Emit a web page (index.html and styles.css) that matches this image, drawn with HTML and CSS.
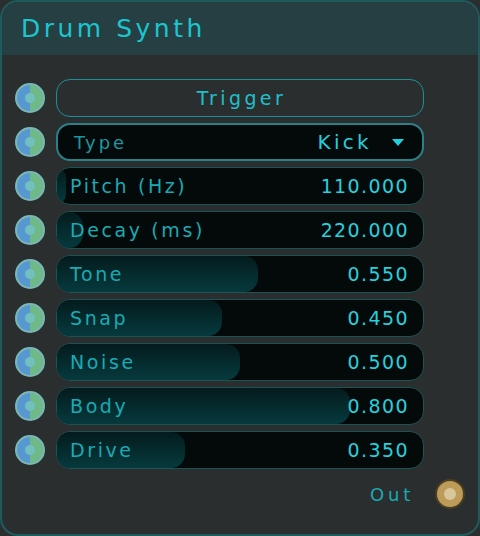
FILE: index.html
```html
<!DOCTYPE html>
<html>
<head>
<meta charset="utf-8">
<link rel="stylesheet" href="styles.css">
</head>
<body>
<div class="panel">
  <div class="header"><span class="title">Drum Synth</span></div>
  <div class="rows">
    <div class="row"><span class="port"></span><button class="trigger">Trigger</button></div>
    <div class="row"><span class="port"></span>
      <div class="select"><span class="sel-label">Type</span><span class="sel-value">Kick</span><span class="caret"></span></div>
    </div>
    <div class="row"><span class="port"></span>
      <div class="slider"><span class="fill" style="width:9px"></span><span class="s-label">Pitch (Hz)</span><span class="s-value">110.000</span></div>
    </div>
    <div class="row"><span class="port"></span>
      <div class="slider"><span class="fill" style="width:26px"></span><span class="s-label">Decay (ms)</span><span class="s-value">220.000</span></div>
    </div>
    <div class="row"><span class="port"></span>
      <div class="slider"><span class="fill" style="width:55%"></span><span class="s-label">Tone</span><span class="s-value">0.550</span></div>
    </div>
    <div class="row"><span class="port"></span>
      <div class="slider"><span class="fill" style="width:45%"></span><span class="s-label">Snap</span><span class="s-value">0.450</span></div>
    </div>
    <div class="row"><span class="port"></span>
      <div class="slider"><span class="fill" style="width:50%"></span><span class="s-label">Noise</span><span class="s-value">0.500</span></div>
    </div>
    <div class="row"><span class="port"></span>
      <div class="slider"><span class="fill" style="width:80%"></span><span class="s-label">Body</span><span class="s-value">0.800</span></div>
    </div>
    <div class="row"><span class="port"></span>
      <div class="slider"><span class="fill" style="width:35%"></span><span class="s-label">Drive</span><span class="s-value">0.350</span></div>
    </div>
    <div class="out-row"><span class="out-label">Out</span><span class="port-out"></span></div>
  </div>
</div>
</body>
</html>
```

FILE: styles.css
```css
html, body {
  margin: 0;
  padding: 0;
  background: #2b2e2f;
}
body {
  font-family: "DejaVu Sans", "Open Sans", sans-serif;
}
.panel {
  width: 480px;
  height: 536px;
  box-sizing: border-box;
  border: 2px solid #1f5b5d;
  border-radius: 18px;
  background: #2b2e2f;
  overflow: hidden;
}
.header {
  height: 53px;
  background: #263f42;
  display: flex;
  align-items: center;
  padding-left: 19px;
}
.title {
  color: #1cc6d0;
  font-size: 25px;
  letter-spacing: 3.5px;
  margin-top: -1px;
}
.rows {
  padding: 24px 13px 0 13px;
  display: flex;
  flex-direction: column;
  gap: 6px;
}
.row {
  display: flex;
  align-items: center;
  gap: 11px;
  height: 38px;
}
.port {
  width: 30px;
  height: 30px;
  box-sizing: border-box;
  border-radius: 50%;
  border: 2px solid #7ab8b6;
  background: linear-gradient(90deg, #5898d0 50%, #6fb887 50%);
  position: relative;
  flex: none;
}
.port::after {
  content: "";
  position: absolute;
  left: 8px;
  top: 8px;
  width: 10px;
  height: 10px;
  border-radius: 50%;
  background: #72bfc0;
}
.trigger {
  width: 368px;
  height: 38px;
  box-sizing: border-box;
  border: 1px solid #1a929b;
  border-radius: 14px;
  background: #2b2e2f;
  color: #1fc0cb;
  font-family: inherit;
  font-size: 19px;
  letter-spacing: 3.4px;
  padding: 0 0 0 3px;
}
.select {
  width: 368px;
  height: 38px;
  box-sizing: border-box;
  border: 2px solid #2a8189;
  border-radius: 14px;
  background: #04090a;
  display: flex;
  align-items: center;
  padding: 0 18px 0 16px;
}
.sel-label {
  color: #1a98a2;
  font-size: 18px;
  letter-spacing: 2.9px;
  flex: 1;
}
.sel-value {
  color: #20d0dc;
  font-size: 20px;
  letter-spacing: 3.3px;
  margin-right: 20px;
}
.caret {
  width: 0;
  height: 0;
  border-left: 6.5px solid transparent;
  border-right: 6.5px solid transparent;
  border-top: 7px solid #20d0dc;
}
.slider {
  width: 368px;
  height: 38px;
  box-sizing: border-box;
  border: 1px solid #1c5356;
  border-radius: 14px;
  background: #04090a;
  display: flex;
  align-items: center;
  padding: 0 14px 0 13px;
  position: relative;
  overflow: hidden;
}
.fill {
  position: absolute;
  left: 0;
  top: 0;
  bottom: 0;
  border-radius: 0 14px 14px 0;
  background: linear-gradient(180deg, #041b1d 0%, #063a3d 100%);
}
.s-label {
  position: relative;
  color: #19aab4;
  font-size: 19px;
  letter-spacing: 2.6px;
  flex: 1;
}
.s-value {
  position: relative;
  color: #22d2de;
  font-size: 19px;
  letter-spacing: 1.4px;
}
.out-row {
  display: flex;
  align-items: center;
  justify-content: flex-end;
  gap: 21px;
  height: 30px;
  margin-top: 4px;
}
.out-label {
  color: #1aa9b3;
  font-size: 18px;
  letter-spacing: 3.8px;
}
.port-out {
  width: 30px;
  height: 30px;
  box-sizing: border-box;
  border-radius: 50%;
  border: 2px solid #4a3f22;
  background: #bc9c58;
  position: relative;
  flex: none;
}
.port-out::after {
  content: "";
  position: absolute;
  left: 7px;
  top: 7px;
  width: 12px;
  height: 12px;
  border-radius: 50%;
  background: #d8c79b;
}
```
